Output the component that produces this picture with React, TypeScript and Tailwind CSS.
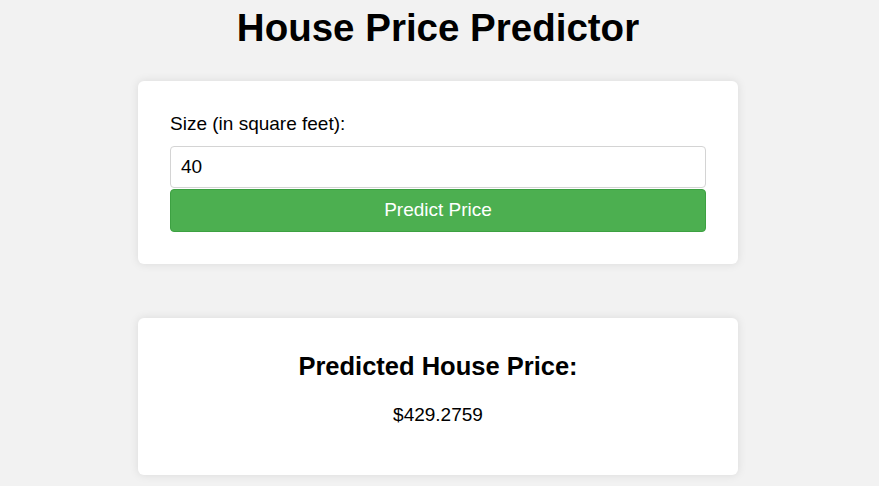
import React, { useState } from 'react';

const App: React.FC = () => {
  const [size, setSize] = useState('40');

  return (
    <div className="min-h-screen bg-[#f2f2f2] text-black font-['Liberation_Sans',Arial,sans-serif]">
      <div className="pt-[6px] pr-[3px]">
        <h1 className="text-center text-[38.5px] leading-[44px] font-bold">House Price Predictor</h1>

        <div className="mx-auto mt-[31px] w-[600px] rounded-md bg-white p-8 shadow-[0_0_10px_rgba(0,0,0,0.1)]">
          <label htmlFor="size" className="block text-[19px] leading-[22px]">
            Size (in square feet):
          </label>
          <input
            id="size"
            type="text"
            value={size}
            onChange={(e) => setSize(e.target.value)}
            className="mt-[11px] block h-[42px] w-full rounded border border-[#d4d4d4] bg-white px-[10px] text-[19px] outline-none"
          />
          <button className="mt-px block h-[43px] w-full rounded border border-[#3da142] bg-[#4caf50] text-[19px] text-white">
            Predict Price
          </button>
        </div>

        <div className="mx-auto mt-[54px] w-[600px] rounded-md bg-white pt-[34px] pb-[49px] text-center shadow-[0_0_10px_rgba(0,0,0,0.1)]">
          <h2 className="text-[25.5px] leading-[29px] font-bold">Predicted House Price:</h2>
          <p className="mt-[23px] text-[19px] leading-[22px]">$429.2759</p>
        </div>
      </div>
    </div>
  );
};

export default App;
